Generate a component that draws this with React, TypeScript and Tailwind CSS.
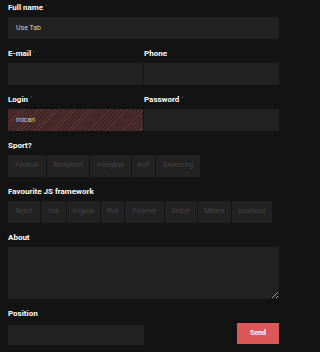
import { ReactNode } from "react";

const sports: [string, string][] = [
    ["Football", "w-[38px]"],
    ["Basketball", "w-[42px]"],
    ["Volleyball", "w-[41px]"],
    ["Golf", "w-[23px]"],
    ["Swimming", "w-[44px]"],
];
const frameworks: [string, string][] = [
    ["React", "w-[32px]"],
    ["Vue", "w-[25px]"],
    ["Angular", "w-[33px]"],
    ["Riot", "w-[23px]"],
    ["Polymer", "w-[39px]"],
    ["Ember", "w-[32px]"],
    ["Meteor", "w-[33px]"],
    ["knockout", "w-[40px]"],
];

function Label({ children, required }: { children: ReactNode; required?: boolean }) {
    return (
        <div className="h-[12px] mb-[3px] leading-[12px] text-[8px] font-bold text-white">
            {children}
            {required && <sup className="ml-[2px] text-[5px] font-normal text-[#555]">*</sup>}
        </div>
    );
}

function Input({ value, error, className = "" }: { value?: string; error?: boolean; className?: string }) {
    const bg = error
        ? "bg-[repeating-linear-gradient(135deg,#5e3232_0_1px,#3c2626_1px_3px)]"
        : "bg-[#222222]";
    return (
        <input
            readOnly
            value={value ?? ""}
            className={`block h-[22px] w-full px-[8px] text-[7px] text-[#cfcfcf] outline-none ${bg} ${className}`}
        />
    );
}

function ButtonGroup({ items }: { items: [string, string][] }) {
    return (
        <div className="flex gap-px">
            {items.map(([item, width]) => (
                <button key={item} type="button" className={`h-[22px] ${width} shrink-0 bg-[#222222] text-[6.5px] text-[#444444]`}>
                    {item}
                </button>
            ))}
        </div>
    );
}

export default function App() {
    return (
        <div className="h-[352px] w-full overflow-hidden bg-[#131313] pt-[2px] font-['Roboto',sans-serif]">
            <form className="ml-[8px] w-[271px]">
                <div className="mb-[9px]">
                    <Label required>Full name</Label>
                    <Input value="Use Tab" />
                </div>

                <div className="mb-[9px] grid grid-cols-2 gap-px">
                    <div>
                        <Label required>E-mail</Label>
                        <Input />
                    </div>
                    <div>
                        <Label>Phone</Label>
                        <Input />
                    </div>
                </div>

                <div className="mb-[9px] grid grid-cols-2 gap-px">
                    <div>
                        <Label required>Login</Label>
                        <Input value="mican" error />
                    </div>
                    <div>
                        <Label required>Password</Label>
                        <Input />
                    </div>
                </div>

                <div className="mb-[9px]">
                    <Label>Sport?</Label>
                    <ButtonGroup items={sports} />
                </div>

                <div className="mb-[9px]">
                    <Label>Favourite JS framework</Label>
                    <ButtonGroup items={frameworks} />
                </div>

                <div className="mb-[9px]">
                    <Label>About</Label>
                    <textarea readOnly className="block h-[52px] w-full bg-[#222222] outline-none" />
                </div>

                <div>
                    <Label>Position</Label>
                    <div className="flex items-start justify-between">
                        <Input className="!w-[136px] !h-[20px] mt-[2px]" />
                        <button type="button" className="h-[21px] w-[42px] bg-[#dc5757] text-[7px] font-bold text-white">
                            Send
                        </button>
                    </div>
                </div>
            </form>
        </div>
    );
}
